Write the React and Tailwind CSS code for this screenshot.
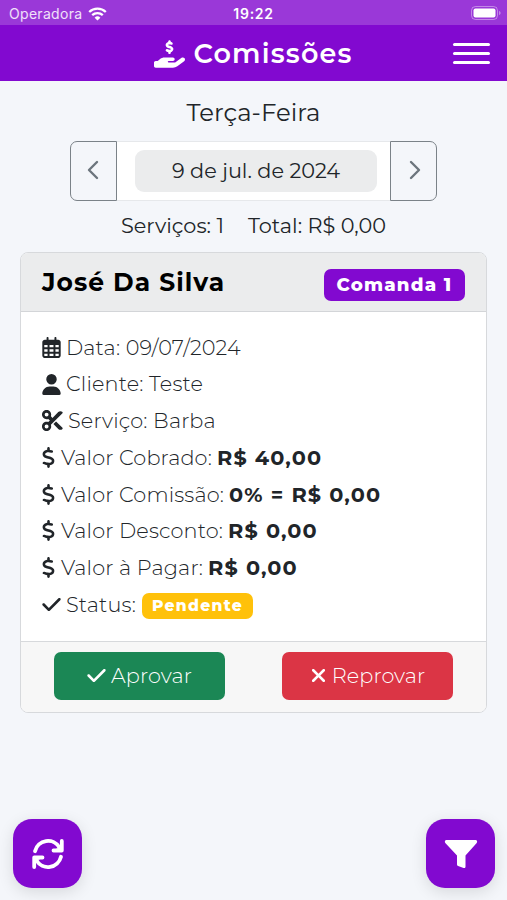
import React from 'react';
import {
    FaHandHoldingDollar,
    FaRegCalendarDays,
    FaUser,
    FaScissors,
    FaDollarSign,
    FaCheck,
    FaXmark
} from 'react-icons/fa6';

const WifiIcon = () => (
    <svg width="19" height="14" viewBox="0 0 19 14" fill="none" stroke="white" strokeWidth="2.300">
        <path d="M1.200 5a12 12 0 0 1 16.600 0" />
        <path d="M4.200 8.200a7.700 7.700 0 0 1 10.600 0" />
        <path d="M9.500 13.600 L6.600 10.700a4.200 4.200 0 0 1 5.800 0z" fill="white" stroke="none" />
    </svg>
);

const StatusBar = () => (
    <div className="relative h-[25px] bg-[#9a38d8] flex items-center justify-between pl-[9px] pr-[6px] pt-[2px] text-white font-['Inter','Liberation_Sans',sans-serif]">
        <div className="flex items-center gap-[6px]">
            <span className="text-[14px] tracking-[0.3px] text-white/85">Operadora</span>
            <WifiIcon />
        </div>
        <span className="absolute left-1/2 -translate-x-1/2 text-[14px] font-semibold tracking-[0.7px]">19:22</span>
        <svg width="30" height="15" viewBox="0 0 30 15">
            <rect x="0.5" y="0.5" width="26" height="13" rx="4" fill="none" stroke="white" strokeOpacity="0.4" />
            <rect x="2.5" y="2.5" width="22" height="9" rx="2" fill="white" />
            <path d="M28 5v4c1-.3 1.600-1.100 1.600-2s-.6-1.700-1.600-2z" fill="white" fillOpacity="0.4" />
        </svg>
    </div>
);

const Header = () => (
    <header className="relative h-[56px] bg-[#8209d0] flex items-center justify-center pt-[1px] text-white">
        <h1 className="flex items-center gap-[8px]">
            <FaHandHoldingDollar className="w-[31px] h-[28px]" />
            <span className="text-[27px] font-semibold tracking-[1.2px] leading-none">Comissões</span>
        </h1>
        <button aria-label="Menu" className="absolute right-[17px] flex flex-col gap-[6px]">
            <span className="w-[37px] h-[3px] rounded-full bg-white"></span>
            <span className="w-[37px] h-[3px] rounded-full bg-white"></span>
            <span className="w-[37px] h-[3px] rounded-full bg-white"></span>
        </button>
    </header>
);

const Chevron = ({ d }) => (
    <svg width="12" height="20" viewBox="0 0 12 20" fill="none" stroke="#6c757d" strokeWidth="2.400" strokeLinecap="round" strokeLinejoin="round">
        <path d={d} />
    </svg>
);

const DatePicker = () => (
    <div className="mx-auto mt-[14px] w-[367px] h-[60px] flex">
        <button className="w-[47px] border border-[#7b8288] rounded-l-[7px] flex items-center justify-center pb-[2px] pr-[2px]">
            <Chevron d="M10 2 L2 10 L10 18" />
        </button>
        <div className="flex-1 bg-white border-y border-[#e6e8eb] flex items-center justify-center pl-[5px]">
            <div className="w-[242px] h-[42px] rounded-[9px] bg-[#ebeced] flex items-center justify-center text-[20.8px]">
                9 de jul. de 2024
            </div>
        </div>
        <button className="w-[47px] border border-[#7b8288] rounded-r-[7px] flex items-center justify-center pb-[2px] pl-[2px]">
            <Chevron d="M2 2 L10 10 L2 18" />
        </button>
    </div>
);

const rows = [
    { icon: FaRegCalendarDays, iconClass: 'w-[19px] h-[21px] mr-[5px]', label: 'Data: 09/07/2024' },
    { icon: FaUser, iconClass: 'w-[19px] h-[21px] mr-[5px]', label: 'Cliente: Teste' },
    { icon: FaScissors, iconClass: 'w-[21px] h-[21px] mr-[5px]', label: 'Serviço: Barba' },
    { icon: FaDollarSign, iconClass: 'w-[13px] h-[21px] mr-[6px]', label: 'Valor Cobrado:', value: 'R$ 40,00' },
    { icon: FaDollarSign, iconClass: 'w-[13px] h-[21px] mr-[6px]', label: 'Valor Comissão:', value: '0% = R$ 0,00' },
    { icon: FaDollarSign, iconClass: 'w-[13px] h-[21px] mr-[6px]', label: 'Valor Desconto:', value: 'R$ 0,00' },
    { icon: FaDollarSign, iconClass: 'w-[13px] h-[21px] mr-[6px]', label: 'Valor à Pagar:', value: 'R$ 0,00' },
    { icon: FaCheck, iconClass: 'w-[19px] h-[21px] mr-[5px]', label: 'Status:', badge: 'Pendente' }
];

const Row = ({ icon: Icon, iconClass, label, value, badge }) => (
    <li className="h-[36.7px] flex items-center whitespace-nowrap text-[20.8px]">
        <Icon className={`shrink-0 text-[#212529] ${iconClass}`} />
        <span className="font-light tracking-[0.15px]">{label}</span>
        {value && <strong className="ml-[5px] font-bold tracking-[1.15px]">{value}</strong>}
        {badge && (
            <span className="ml-[6px] mt-[4px] w-[111px] h-[26px] rounded-[7px] bg-[#ffc10a] text-white text-[15.6px] font-extrabold tracking-[1.3px] flex items-center justify-center">
                {badge}
            </span>
        )}
    </li>
);

const CommissionCard = () => (
    <section className="mx-[20px] mt-[11px] h-[461px] border border-[#d7d9dc] rounded-[8px] overflow-hidden bg-white flex flex-col">
        <div className="h-[59px] shrink-0 bg-[#ebeced] border-b border-[#d3d5d8] flex items-center justify-between pl-[21px] pr-[21px]">
            <h2 className="pt-[1px] text-[24.96px] font-bold text-black tracking-[1.04px]">José Da Silva</h2>
            <span className="w-[141px] h-[32px] mt-[5px] rounded-[7px] bg-[#8209d0] text-white text-[18.2px] font-extrabold tracking-[1.2px] flex items-center justify-center">
                Comanda 1
            </span>
        </div>
        <ul className="flex-1 pl-[21px] pt-[17px]">
            {rows.map((row) => (
                <Row key={row.label} {...row} />
            ))}
        </ul>
        <div className="h-[71px] shrink-0 bg-[#f7f7f7] border-t border-[#d7d9dc] flex items-center justify-between px-[33px] pb-[3px] text-white text-[20.8px] font-light">
            <button className="w-[171px] h-[48px] rounded-[7px] bg-[#1b8755] flex items-center justify-center gap-[5px]">
                <FaCheck className="w-[19px] h-[21px]" />
                <span className="tracking-[0.15px]">Aprovar</span>
            </button>
            <button className="w-[171px] h-[48px] rounded-[7px] bg-[#db3545] flex items-center justify-center gap-[5px]">
                <FaXmark className="w-[17px] h-[21px]" />
                <span className="tracking-[0.1px]">Reprovar</span>
            </button>
        </div>
    </section>
);

const RefreshIcon = () => (
    <svg width="34" height="32" viewBox="0 0 34 32" fill="none" stroke="white" strokeWidth="3.800" strokeLinecap="round" strokeLinejoin="round">
        <path d="M4 13.200a13.400 13.400 0 0 1 24.500-3.700" />
        <path d="M30.800 3v9.500h-8.300" />
        <path d="M30 18.800a13.400 13.400 0 0 1-24.500 3.700" />
        <path d="M3.200 29v-9.500h8.300" />
        <path d="M31 6v6.500h-6.500z" fill="white" strokeWidth="1" />
        <path d="M3 26v-6.500h6.500z" fill="white" strokeWidth="1" />
    </svg>
);

const FilterIcon = () => (
    <svg width="34" height="30" viewBox="0 0 34 30" fill="white">
        <path d="M2.500 1h29c1.500 0 2.200 1.800 1.200 2.900L21.500 16.500v11.200c0 1-1 1.600-1.900 1.200l-5.500-1.800c-.7-.3-1.100-.8-1.100-1.500v-9.100L1.300 3.900C.3 2.800 1 1 2.500 1z" />
    </svg>
);

const App = () => {
    return (
        <div className="w-full h-[900px] flex flex-col overflow-hidden bg-[#f4f6fa] text-[#212529] font-['Montserrat','Inter','Liberation_Sans',sans-serif]">
            <StatusBar />
            <Header />
            <main>
                <p className="mt-[16px] text-center text-[24.400px] leading-[30px]">Terça-Feira</p>
                <DatePicker />
                <div className="mt-[10px] mb-[12px] h-[29px] flex items-center justify-center gap-[24px] text-[20.8px]">
                    <span>Serviços: 1</span>
                    <span>Total: R$ 0,00</span>
                </div>
                <CommissionCard />
            </main>
            <footer className="mt-auto mb-[12px] flex justify-between pl-[13px] pr-[12px] text-white">
                <button aria-label="Atualizar" className="w-[69px] h-[69px] rounded-[19px] bg-[#8209d0] shadow-[0_4px_16px_rgba(0,0,0,0.12)] flex items-center justify-center">
                    <RefreshIcon />
                </button>
                <button aria-label="Filtrar" className="w-[69px] h-[69px] rounded-[19px] bg-[#8209d0] shadow-[0_4px_16px_rgba(0,0,0,0.12)] flex items-center justify-center">
                    <FilterIcon />
                </button>
            </footer>
        </div>
    );
};

export default App;
